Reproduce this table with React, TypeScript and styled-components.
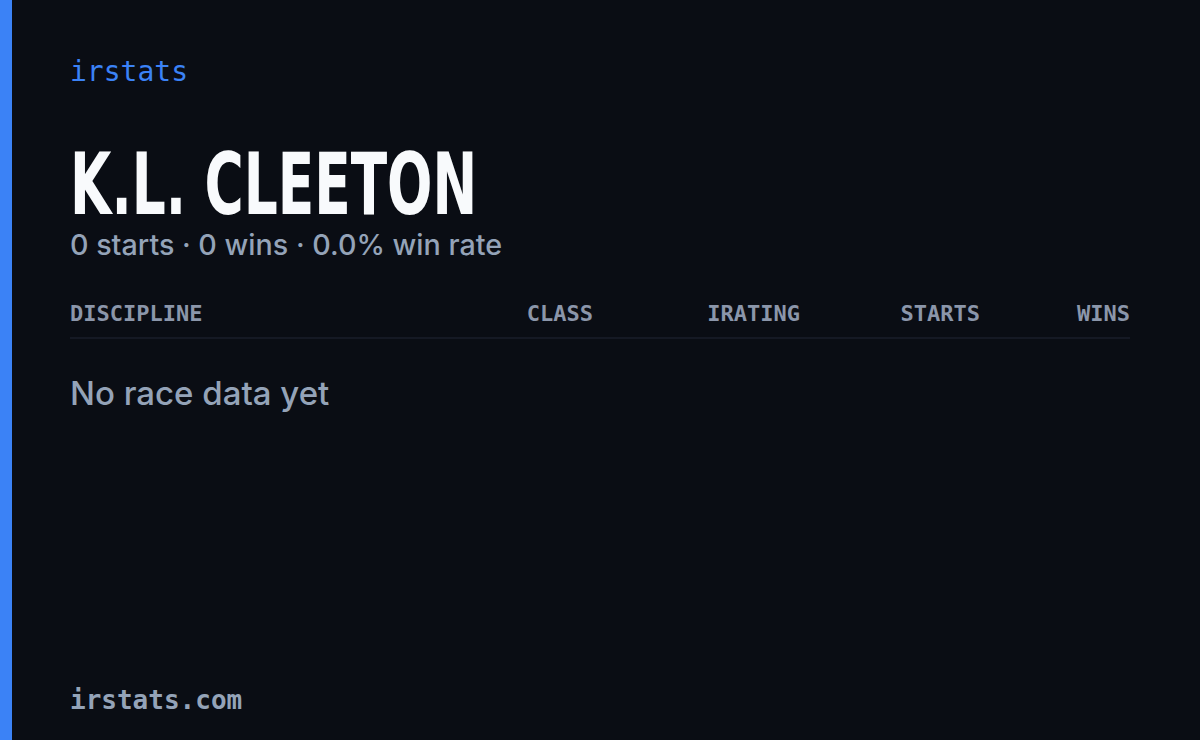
import styled, { createGlobalStyle } from 'styled-components'

const Global = createGlobalStyle`
  html, body {
    margin: 0;
    padding: 0;
    background: #0a0d14;
  }
  #root {
    width: 1200px;
    height: 740px;
  }
`

const columns = [
  { key: 'discipline', label: 'DISCIPLINE', align: 'left' },
  { key: 'class', label: 'CLASS', align: 'right' },
  { key: 'irating', label: 'IRATING', align: 'right' },
  { key: 'starts', label: 'STARTS', align: 'right' },
  { key: 'wins', label: 'WINS', align: 'right' },
] as const

export default function App() {
  return (
    <>
      <Global />
      <Card>
        <Accent />
        <Main>
          <Brand>irstats</Brand>
          <Name>
            <span>K.L. CLEETON</span>
          </Name>
          <Summary>0 starts · 0 wins · 0.0% win rate</Summary>
          <HeaderRow>
            {columns.map((c) => (
              <HeaderCell key={c.key} $align={c.align}>
                {c.label}
              </HeaderCell>
            ))}
          </HeaderRow>
          <Empty>No race data yet</Empty>
          <Footer>irstats.com</Footer>
        </Main>
      </Card>
    </>
  )
}

const Card = styled.div`
  display: flex;
  width: 1200px;
  height: 740px;
  background: #0a0d14;
  overflow: hidden;
`

const Accent = styled.div`
  width: 12px;
  flex-shrink: 0;
  background: #3b82f6;
`

const Main = styled.div`
  flex: 1;
  display: flex;
  flex-direction: column;
  padding: 55px 70px 24px 58px;
`

const Brand = styled.div`
  font-family: 'DejaVu Sans Mono', monospace;
  font-size: 28px;
  line-height: 34px;
  color: #3b82f6;
`

const Name = styled.h1`
  margin: 51px 0 0;
  font-family: 'DejaVu Sans', sans-serif;
  font-stretch: condensed;
  font-weight: 700;
  font-size: 86px;
  line-height: 88px;
  color: #f8fafc;
  white-space: nowrap;
  span {
    display: inline-block;
    transform-origin: left center;
    transform: scaleX(0.69);
  }
`

const Summary = styled.div`
  margin-top: 2px;
  font-family: Inter, sans-serif;
  font-weight: 500;
  font-size: 28.7px;
  line-height: 30px;
  color: #94a3b8;
`

const HeaderRow = styled.div`
  margin-top: 41px;
  display: grid;
  grid-template-columns: 1fr 160px 207px 180px 150px;
  padding-bottom: 10px;
  border-bottom: 2px solid #151924;
`

const HeaderCell = styled.div<{ $align: 'left' | 'right' }>`
  font-family: 'DejaVu Sans Mono', monospace;
  font-weight: 700;
  font-size: 22px;
  line-height: 26px;
  color: #8b96aa;
  text-align: ${(p) => p.$align};
`

const Empty = styled.div`
  margin-top: 34px;
  font-family: Inter, sans-serif;
  font-weight: 500;
  font-size: 33px;
  line-height: 40px;
  color: #94a3b8;
`

const Footer = styled.div`
  margin-top: auto;
  font-family: 'DejaVu Sans Mono', monospace;
  font-weight: 700;
  font-size: 26px;
  line-height: 32px;
  color: #94a3b8;
`
